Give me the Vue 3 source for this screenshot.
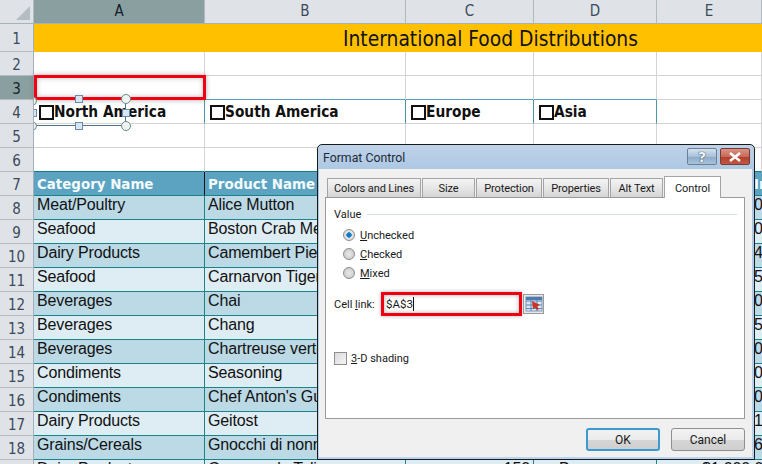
<script setup>
const cols = ['A', 'B', 'C', 'D', 'E']
const region = ['North America', 'South America', 'Europe', 'Asia']
const data = [
  ['Meat/Poultry', 'Alice Mutton', '0'],
  ['Seafood', 'Boston Crab Meat', '0'],
  ['Dairy Products', 'Camembert Pierrot', '4'],
  ['Seafood', 'Carnarvon Tigers', '5'],
  ['Beverages', 'Chai', '0'],
  ['Beverages', 'Chang', '5'],
  ['Beverages', 'Chartreuse verte', '0'],
  ['Condiments', 'Seasoning', '0'],
  ['Condiments', "Chef Anton's Gumbo Mix", '0'],
  ['Dairy Products', 'Geitost', '1'],
  ['Grains/Cereals', 'Gnocchi di nonna Alice', '6']
]
const tabs = [
  { label: 'Colors and Lines', width: 94 },
  { label: 'Size', width: 53 },
  { label: 'Protection', width: 66 },
  { label: 'Properties', width: 66 },
  { label: 'Alt Text', width: 53 },
  { label: 'Control', width: 57, active: true }
]
const radios = [
  { key: 'U', rest: 'nchecked', on: true },
  { key: 'C', rest: 'hecked' },
  { key: 'M', rest: 'ixed' }
]
</script>

<template>
  <div class="page">
    <div class="sheet">
      <div class="corner"><span class="tri"></span></div>
      <div v-for="c in cols" :key="c" class="colhead" :class="{ sel: c === 'A' }">{{ c }}</div>

      <div class="rowhead">1</div>
      <div class="banner"><span>International Food Distributions</span></div>

      <div class="rowhead">2</div>
      <div v-for="c in cols" :key="'r2' + c" class="cell"></div>

      <div class="rowhead sel">3</div>
      <div v-for="c in cols" :key="'r3' + c" class="cell" :class="{ above: c !== 'E' }"></div>

      <div class="rowhead">4</div>
      <div v-for="r in region" :key="r" class="cell region">
        <span class="box"></span><span>{{ r }}</span>
      </div>
      <div class="cell"></div>

      <div class="rowhead">5</div>
      <div v-for="c in cols" :key="'r5' + c" class="cell"></div>

      <div class="rowhead">6</div>
      <div v-for="c in cols" :key="'r6' + c" class="cell above2"></div>

      <div class="rowhead">7</div>
      <div class="th black">Category Name</div>
      <div class="th">Product Name</div>
      <div class="th"></div>
      <div class="th"></div>
      <div class="th far">In</div>

      <template v-for="(d, i) in data" :key="d[1]">
        <div class="rowhead">{{ i + 8 }}</div>
        <div class="td" :class="i % 2 ? 'light' : 'dark'">{{ d[0] }}</div>
        <div class="td" :class="i % 2 ? 'light' : 'dark'">{{ d[1] }}</div>
        <div class="td" :class="i % 2 ? 'light' : 'dark'"></div>
        <div class="td" :class="i % 2 ? 'light' : 'dark'"></div>
        <div class="td far" :class="i % 2 ? 'light' : 'dark'">{{ d[2] }}</div>
      </template>

      <div class="rowhead">19</div>
      <div class="td light">Dairy Products</div>
      <div class="td light">Gorgonzola Telino</div>
      <div class="td light right">150</div>
      <div class="td light center">Beverages</div>
      <div class="td light last">$1,000.00</div>
    </div>

    <div class="redcell"></div>

    <svg class="handles" width="104" height="40" viewBox="34 92 104 40">
      <path d="M34 125.5H126M125.5 104V121" fill="none" stroke="#50708a" stroke-width="1" />
      <g fill="#d5e6f5" stroke="#6d8aa8">
        <rect x="75.5" y="95.5" width="7" height="7" />
        <rect x="75.5" y="122.5" width="7" height="7" />
        <rect x="122.5" y="109.5" width="7" height="7" />
        <rect x="31.5" y="109.5" width="5" height="7" />
      </g>
      <g fill="#eef5f2" stroke="#6f8a88">
        <circle cx="126" cy="99" r="4.5" />
        <circle cx="126" cy="126" r="4.5" />
        <circle cx="32.5" cy="126" r="4" />
        <circle cx="32.5" cy="101" r="4" />
      </g>
    </svg>

    <section class="dialog">
      <header class="titlebar">
        <span class="title">Format Control</span>
        <div class="winbtns">
          <span class="winbtn help">?</span>
          <span class="winbtn close">
            <svg width="14" height="10" viewBox="0 0 14 10">
              <path d="M2 1L12 9M12 1L2 9" stroke="#fff" stroke-width="2.6" fill="none" />
            </svg>
          </span>
        </div>
      </header>
      <div class="body">
        <div class="tabs">
          <div
            v-for="t in tabs"
            :key="t.label"
            class="tab"
            :class="{ active: t.active }"
            :style="{ width: t.width + 'px' }"
          >{{ t.label }}</div>
        </div>
        <div class="panel">
          <div class="group"><span>Value</span><i class="rule"></i></div>
          <div class="radios">
            <label v-for="r in radios" :key="r.key" class="radio">
              <span class="dot" :class="{ on: r.on }"></span>
              <span><u>{{ r.key }}</u>{{ r.rest }}</span>
            </label>
          </div>
          <div class="linkrow">
            <span class="linklabel">Cell <u>l</u>ink:</span>
            <div class="linkinput"><span>$A$3</span><i class="caret"></i></div>
            <span class="picker">
              <svg width="18" height="16" viewBox="0 0 18 16">
                <rect x="1" y="1" width="16" height="14" fill="#dbe8f5" stroke="#7f99b5" />
                <path d="M1 5H17M1 9H17M1 12.5H17M6 1V15M12 1V15" stroke="#5b84b5" stroke-width="1" />
                <rect x="1" y="1" width="16" height="3" fill="#4d7bb0" />
                <path d="M7 5L15 9L12 10.5L14 13L12 14L10 11.5L8 13Z" fill="#c8341f" />
              </svg>
            </span>
          </div>
          <label class="shade"><span class="check"></span><span><u>3</u>-D shading</span></label>
        </div>
        <div class="actions">
          <button class="btn default">OK</button>
          <button class="btn">Cancel</button>
        </div>
      </div>
    </section>
  </div>
</template>

<style scoped>
.page {
  position: relative;
  width: 762px;
  height: 464px;
  overflow: hidden;
  background: #fff;
  font-family: "Liberation Sans", Arial, sans-serif;
  color: #111;
}
.sheet {
  display: grid;
  grid-template-columns: 34px 171px 201px 128px 123px 105px;
  grid-template-rows: 24px 28px;
  grid-auto-rows: 24px;
}
.sheet > div {
  box-sizing: border-box;
  min-width: 0;
  overflow: hidden;
  white-space: nowrap;
}
.corner {
  position: relative;
  background: #dfe3e8;
  border-right: 1px solid #b4bcc4;
  border-bottom: 1px solid #a8b0b8;
}
.tri {
  position: absolute;
  right: 3px;
  bottom: 3px;
  width: 0;
  height: 0;
  border-left: 14px solid transparent;
  border-bottom: 14px solid #b4bcc4;
}
.colhead {
  display: flex;
  align-items: center;
  justify-content: center;
  background: #dfe3e8;
  border-right: 1px solid #b0b8c0;
  border-bottom: 1px solid #a8b0b8;
  font: 15px/1 "DejaVu Sans Condensed", "DejaVu Sans", sans-serif;
  color: #3a4a5c;
}
.rowhead {
  display: flex;
  align-items: center;
  justify-content: center;
  padding-top: 3px;
  background: #dfe3e8;
  border-right: 1px solid #a4b0bc;
  border-bottom: 1px solid #b4bcc4;
  font: 15px/1 "DejaVu Sans Condensed", "DejaVu Sans", sans-serif;
  color: #3a4a5c;
}
.colhead.sel,
.rowhead.sel {
  background: #8aa0a0;
  color: #14202c;
}
.banner {
  grid-column: span 5;
  background: #ffc000;
  padding-left: 309px;
  padding-top: 1px;
  font: 20.8px/29px "DejaVu Sans Condensed", "DejaVu Sans", sans-serif;
  color: #111;
}
.cell {
  border-right: 1px solid #d4d4d4;
  border-bottom: 1px solid #d4d4d4;
}
.cell.above {
  border-bottom-color: #5a9fb5;
}
.cell.above2 {
  border-bottom-color: #0f7f86;
}
.region {
  display: flex;
  align-items: center;
  padding-left: 5px;
  padding-top: 2px;
  border-right-color: #4a96ab;
  font: bold 15.3px/1 "DejaVu Sans Condensed", "DejaVu Sans", sans-serif;
  color: #111;
}
.box {
  box-sizing: border-box;
  width: 15px;
  height: 15px;
  border: 2px solid #111;
  background: #fff;
}
.th {
  padding-left: 3px;
  background: #5ba3c0;
  border-right: 1px solid #1b8389;
  border-bottom: 1px solid #1b8389;
  font: bold 14.9px/24px "DejaVu Sans Condensed", "DejaVu Sans", sans-serif;
  color: #f4fbff;
}
.th.black {
  border-right-color: #111;
}
.td {
  padding-left: 3px;
  border-right: 1px solid #1b8389;
  border-bottom: 1px solid #1b8389;
  font-size: 16px;
  line-height: 18px;
  letter-spacing: -0.14px;
  color: #111;
}
.sheet > .far {
  padding-left: 97px;
  border-right: 0;
}
.sheet > .last {
  padding-left: 45px;
  border-right: 0;
}
.right {
  text-align: right;
  padding-right: 3px;
}
.center {
  text-align: center;
}
.dark {
  background: #bcd9e6;
}
.light {
  background: #deecf3;
}
.redcell {
  position: absolute;
  left: 34px;
  top: 75px;
  box-sizing: border-box;
  width: 172px;
  height: 25px;
  border: 3px solid #f00010;
  box-shadow: 0 0 5px rgba(70, 70, 70, 0.45), inset 0 0 5px rgba(70, 70, 70, 0.35);
}
.handles {
  position: absolute;
  left: 34px;
  top: 92px;
}
.dialog {
  position: absolute;
  left: 317px;
  top: 144px;
  box-sizing: border-box;
  width: 438px;
  height: 316px;
  display: flex;
  flex-direction: column;
  padding: 0 2px 2px 1px;
  border: 1px solid #1a1a1a;
  border-radius: 5px 5px 0 0;
  background: linear-gradient(#bfd3e8, #a9c5e3 30px, #b9d4ef);
  font: 11px Roboto, sans-serif;
  color: #1a1a1a;
}
.titlebar {
  flex: none;
  box-sizing: border-box;
  height: 24px;
  display: flex;
  align-items: center;
  justify-content: space-between;
  padding: 2px 2px 0 4px;
}
.title {
  font-size: 12.3px;
  color: #1c2a38;
}
.winbtns {
  display: flex;
  gap: 3px;
  align-self: flex-start;
  margin-top: 1px;
}
.winbtn {
  box-sizing: border-box;
  width: 30px;
  height: 17px;
  display: flex;
  align-items: center;
  justify-content: center;
  border: 1px solid #6d7f92;
  border-radius: 2px;
}
.help {
  background: linear-gradient(#d4e2f0, #a8c0da 50%, #8fabc8 55%, #a9c2dc);
  font: bold 14px/1 "DejaVu Sans", sans-serif;
  color: #f2f6fa;
  text-shadow: 0 0 1px #2a3c50, 0 0 1px #2a3c50;
}
.close {
  background: linear-gradient(#d99488, #c76a58 50%, #b33f2a 55%, #c05844);
  border-color: #7a3a30;
}
.body {
  flex: 1;
  min-height: 0;
  display: flex;
  flex-direction: column;
  padding: 7px 6px 0;
  background: #f0f0f0;
}
.tabs {
  flex: none;
  height: 21px;
  display: flex;
  align-items: flex-end;
  gap: 1px;
  padding-left: 2px;
}
.tab {
  box-sizing: border-box;
  height: 19px;
  display: flex;
  align-items: center;
  justify-content: center;
  padding-top: 1px;
  border: 1px solid #a5a5a5;
  border-bottom: 0;
  background: linear-gradient(#f4f4f4, #e6e6e6 50%, #d4d4d4);
  font-size: 11px;
  letter-spacing: -0.1px;
  white-space: nowrap;
}
.tab.active {
  position: relative;
  z-index: 1;
  height: 22px;
  margin-bottom: -1px;
  background: #fff;
}
.panel {
  box-sizing: border-box;
  height: 222px;
  width: 420px;
  padding: 8px 7px 0 8px;
  border: 1px solid #9a9a9a;
  background: #fff;
  font-size: 11px;
}
.group {
  display: flex;
  align-items: center;
  gap: 6px;
  height: 16px;
}
.rule {
  flex: 1;
  height: 1px;
  background: #d6dee2;
}
.radios {
  display: flex;
  flex-direction: column;
  gap: 3px;
  margin: 5px 0 0 9px;
}
.radio {
  display: flex;
  align-items: center;
  gap: 5px;
  height: 16px;
}
.dot {
  box-sizing: border-box;
  width: 12px;
  height: 12px;
  border-radius: 50%;
  border: 1px solid #8c8c8c;
  background: radial-gradient(circle, #e8e8e8, #c4c4c4);
}
.dot.on {
  background: radial-gradient(circle, #0a6fb8 0, #1d8bd0 35%, #e6e6e6 42%, #d4d4d4);
}
.linkrow {
  display: flex;
  align-items: center;
  margin-top: 11px;
  height: 24px;
}
.linklabel {
  width: 47px;
  flex: none;
}
.linkinput {
  box-sizing: border-box;
  width: 141px;
  height: 24px;
  display: flex;
  align-items: center;
  padding-left: 2px;
  border: 3px solid #f00010;
  box-shadow: inset 0 0 4px rgba(70, 70, 70, 0.45), 0 0 4px rgba(70, 70, 70, 0.4);
  font-size: 11.5px;
}
.caret {
  width: 1px;
  height: 14px;
  background: #111;
}
.picker {
  box-sizing: border-box;
  width: 21px;
  height: 20px;
  display: flex;
  align-items: center;
  justify-content: center;
  margin-left: 1px;
  border: 1px solid #9a9a9a;
  background: #e8e8e8;
}
.shade {
  display: flex;
  align-items: center;
  gap: 4px;
  margin-top: 34px;
  height: 16px;
}
.check {
  box-sizing: border-box;
  width: 13px;
  height: 13px;
  border: 1px solid #8e8f8f;
  background: linear-gradient(135deg, #dcdcdc, #f4f4f4);
}
.actions {
  display: flex;
  justify-content: flex-end;
  gap: 11px;
  margin-top: 9px;
  width: 420px;
}
.btn {
  box-sizing: border-box;
  width: 74px;
  height: 23px;
  padding: 0;
  border: 1px solid #8e8f8f;
  border-radius: 3px;
  background: linear-gradient(#f2f2f2, #ebebeb 50%, #d6d6d6 52%, #cfcfcf);
  font: 12px Roboto, sans-serif;
  color: #1a1a1a;
}
.btn.default {
  border: 2px solid #3c9ad2;
}
</style>
